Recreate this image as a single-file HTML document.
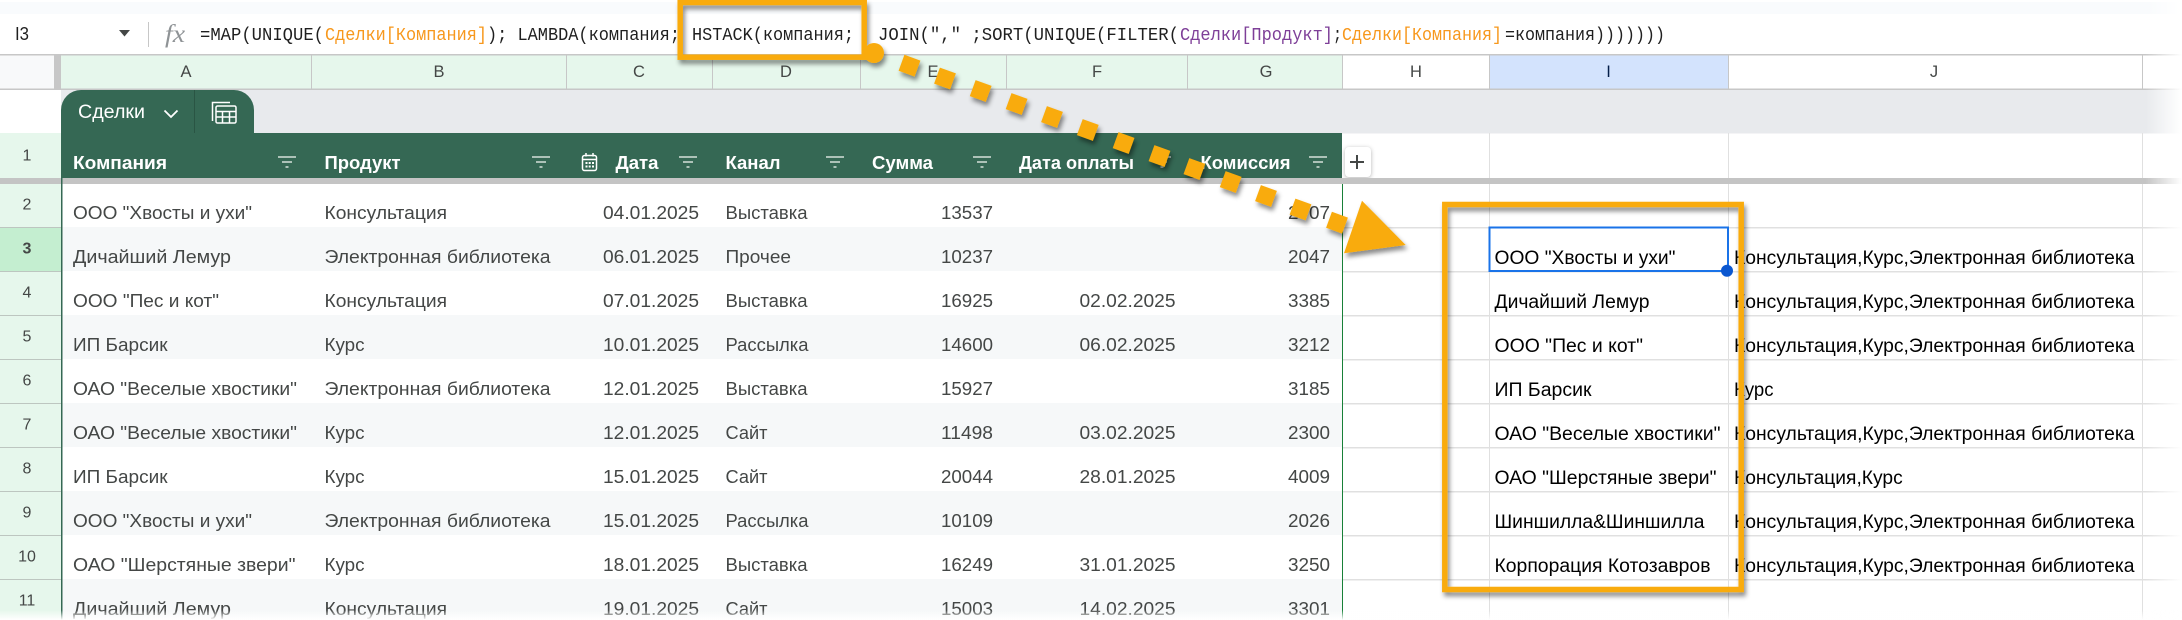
<!DOCTYPE html>
<html><head><meta charset="utf-8">
<style>
html,body{margin:0;padding:0;background:#fff;width:2182px;height:620px;overflow:hidden}
svg{display:block}
text{font-family:"Liberation Sans","Noto Sans CJK SC",sans-serif;white-space:pre}
.t{font-size:18.5px;fill:#444746}
.r{font-size:19px;fill:#000}
.h{font-size:18.5px;font-weight:bold;fill:#fff}
.m{font-family:"Liberation Mono",monospace;font-size:18px;fill:#1f1f1f}
.c{font-size:16.5px;fill:#444746;text-anchor:middle}
.n{font-size:16px;fill:#444746;text-anchor:middle}
</style></head><body>
<svg width="2182" height="620" viewBox="0 0 2182 620" xmlns="http://www.w3.org/2000/svg">
<defs>
<linearGradient id="fr" x1="0" x2="1" y1="0" y2="0"><stop offset="0" stop-color="#fff" stop-opacity="0"/><stop offset="1" stop-color="#fff"/></linearGradient>
<linearGradient id="fb" x1="0" x2="0" y1="0" y2="1"><stop offset="0" stop-color="#fff" stop-opacity="0"/><stop offset="1" stop-color="#fff"/></linearGradient>
<filter id="sh" x="-10%" y="-10%" width="125%" height="125%"><feDropShadow dx="2" dy="4" stdDeviation="2.5" flood-color="#000" flood-opacity=".45"/></filter>
</defs>
<rect width="2182" height="620" fill="#fff"/>
<!-- top band -->
<rect x="0" y="2" width="2182" height="12" fill="#f9fbfd"/>
<!-- formula bar -->
<text x="15" y="40" font-size="18" fill="#1f1f1f" textLength="14" lengthAdjust="spacingAndGlyphs">I3</text>
<path d="M119 30h11l-5.500 6.500z" fill="#444746"/>
<rect x="148" y="22" width="1" height="25" fill="#c7c7c7"/>
<text x="165" y="42" font-size="25" fill="#8f9396" style="font-family:'Liberation Serif',serif;font-style:italic" textLength="20" lengthAdjust="spacingAndGlyphs">fx</text>
<text class="m" x="200" y="40" textLength="124" lengthAdjust="spacingAndGlyphs">=MAP(UNIQUE(</text>
<text class="m" x="325" y="40" textLength="162" lengthAdjust="spacingAndGlyphs" style="fill:#f7981d">Сделки[Компания]</text>
<text class="m" x="487" y="40" textLength="193" lengthAdjust="spacingAndGlyphs">); LAMBDA(компания;</text>
<text class="m" x="692" y="40" textLength="162" lengthAdjust="spacingAndGlyphs">HSTACK(компания;</text>
<text class="m" x="878" y="40" textLength="301" lengthAdjust="spacingAndGlyphs">JOIN("," ;SORT(UNIQUE(FILTER(</text>
<text class="m" x="1180" y="40" textLength="153" lengthAdjust="spacingAndGlyphs" style="fill:#7e3f98">Сделки[Продукт]</text>
<text class="m" x="1333" y="40" textLength="9" lengthAdjust="spacingAndGlyphs">;</text>
<text class="m" x="1342" y="40" textLength="160" lengthAdjust="spacingAndGlyphs" style="fill:#f7981d">Сделки[Компания]</text>
<text class="m" x="1505" y="40" textLength="160" lengthAdjust="spacingAndGlyphs">=компания)))))))</text>
<!-- col headers -->
<rect x="0" y="55" width="54" height="34" fill="#f8f9fa"/>
<rect x="54" y="55" width="7" height="35" fill="#c7c7c7"/>
<rect x="61" y="55" width="1281" height="34" fill="#e6f7ec"/>
<rect x="1489" y="55" width="239" height="34" fill="#d3e3fd"/>
<rect x="0" y="54" width="2182" height="1.500" fill="#c7c7c7"/>
<rect x="0" y="88.500" width="2182" height="1.500" fill="#c7c7c7"/>
<g fill="#c7c7c7">
<rect x="311" y="55" width="1" height="34"/><rect x="566" y="55" width="1" height="34"/><rect x="712" y="55" width="1" height="34"/><rect x="860" y="55" width="1" height="34"/><rect x="1006" y="55" width="1" height="34"/><rect x="1187" y="55" width="1" height="34"/><rect x="1342" y="55" width="1" height="34"/><rect x="1489" y="55" width="1" height="34"/><rect x="1728" y="55" width="1" height="34"/><rect x="2142" y="55" width="1" height="34"/>
</g>
<text class="c" x="186" y="77">A</text><text class="c" x="439" y="77">B</text><text class="c" x="639" y="77">C</text><text class="c" x="786" y="77">D</text><text class="c" x="933" y="77">E</text><text class="c" x="1097" y="77">F</text><text class="c" x="1266" y="77">G</text><text class="c" x="1416" y="77">H</text><text class="c" x="1608.500" y="77" style="fill:#041e49">I</text><text class="c" x="1934" y="77">J</text>
<!-- gray band -->
<rect x="61" y="90" width="2121" height="43.500" fill="#e8eaed"/>
<!-- row number col -->
<rect x="0" y="133" width="61" height="487" fill="#e6f7ec"/>
<rect x="0" y="227" width="61" height="44" fill="#c4eed0"/>
<g fill="#bdc6c0">
<rect x="0" y="227" width="61" height="1"/><rect x="0" y="271" width="61" height="1"/><rect x="0" y="315" width="61" height="1"/><rect x="0" y="359" width="61" height="1"/><rect x="0" y="403" width="61" height="1"/><rect x="0" y="447" width="61" height="1"/><rect x="0" y="491" width="61" height="1"/><rect x="0" y="535" width="61" height="1"/><rect x="0" y="579" width="61" height="1"/>
</g>
<text class="n" x="27" y="160.500">1</text><text class="n" x="27" y="209.500">2</text><text class="n" x="27" y="253.500" style="font-weight:bold">3</text><text class="n" x="27" y="297.500">4</text><text class="n" x="27" y="341.500">5</text><text class="n" x="27" y="385.500">6</text><text class="n" x="27" y="429.500">7</text><text class="n" x="27" y="473.500">8</text><text class="n" x="27" y="517.500">9</text><text class="n" x="27" y="561.500">10</text><text class="n" x="27" y="605.500">11</text>
<!-- grid right -->
<g fill="#e0e0e0">
<rect x="1342" y="227" width="840" height="1.500"/><rect x="1342" y="271" width="840" height="1.500"/><rect x="1342" y="315" width="840" height="1.500"/><rect x="1342" y="359" width="840" height="1.500"/><rect x="1342" y="403" width="840" height="1.500"/><rect x="1342" y="447" width="840" height="1.500"/><rect x="1342" y="491" width="840" height="1.500"/><rect x="1342" y="535" width="840" height="1.500"/><rect x="1342" y="579" width="840" height="1.500"/>
<rect x="1489" y="133" width="1" height="487"/><rect x="1728" y="133" width="1" height="487"/><rect x="2142" y="133" width="1" height="487"/>
</g>
<!-- stripes -->
<rect x="62" y="184" width="1280" height="436" fill="#fff"/>
<g fill="#f6f8f9">
<rect x="62" y="227" width="1280" height="44"/><rect x="62" y="315" width="1280" height="44"/><rect x="62" y="403" width="1280" height="44"/><rect x="62" y="491" width="1280" height="44"/><rect x="62" y="579" width="1280" height="41"/>
</g>
<!-- tab -->
<path d="M61 133V110a20 20 0 0 1 20-20H234a20 20 0 0 1 20 20V133z" fill="#356854"/>
<rect x="194" y="90" width="1" height="43" fill="#2a5544"/>
<text x="78" y="118" font-size="19" fill="#fff" textLength="67" lengthAdjust="spacingAndGlyphs">Сделки</text>
<path d="M164.500 110.500l6.500 6.500 6.500-6.500" fill="none" stroke="#fff" stroke-width="1.800"/>
<g fill="none" stroke="#fff" stroke-width="1.500"><path d="M212.500 121V102.500H230"/><rect x="216" y="106" width="20" height="17" rx="1.500"/><path d="M216 111.500h20M216 117h20M222.500 111.500V123M229.500 111.500V123"/></g>
<!-- header row -->
<rect x="61" y="133" width="1281" height="45" fill="#356854"/>
<text class="h" x="73" y="169" textLength="94" lengthAdjust="spacingAndGlyphs">Компания</text>
<text class="h" x="324.500" y="169" textLength="76" lengthAdjust="spacingAndGlyphs">Продукт</text>
<text class="h" x="615.500" y="169" textLength="43" lengthAdjust="spacingAndGlyphs">Дата</text>
<text class="h" x="725.500" y="169" textLength="55" lengthAdjust="spacingAndGlyphs">Канал</text>
<text class="h" x="872" y="169" textLength="61" lengthAdjust="spacingAndGlyphs">Сумма</text>
<text class="h" x="1019" y="169" textLength="115" lengthAdjust="spacingAndGlyphs">Дата оплаты</text>
<text class="h" x="1200.500" y="169" textLength="90" lengthAdjust="spacingAndGlyphs">Комиссия</text>
<g fill="none" stroke="#d5e0da" stroke-width="1.500">
<path d="M278 157h18M282 162h10M285.500 167h3"/><path d="M532 157h18M536 162h10M539.500 167h3"/><path d="M679 157h18M683 162h10M686.500 167h3"/><path d="M826 157h18M830 162h10M833.500 167h3"/><path d="M973 157h18M977 162h10M980.500 167h3"/><path d="M1153 157h18M1157 162h10M1160.500 167h3"/><path d="M1309 157h18M1313 162h10M1316.500 167h3"/>
</g>
<g fill="none" stroke="#fff" stroke-width="1.500"><rect x="582.500" y="155.500" width="14" height="15" rx="2"/><path d="M582.500 159.500h14M586 153v3.500M593 153v3.500"/></g>
<g fill="#fff"><rect x="585.500" y="162" width="2" height="2"/><rect x="588.700" y="162" width="2" height="2"/><rect x="592" y="162" width="2" height="2"/><rect x="585.500" y="165.500" width="2" height="2"/><rect x="588.700" y="165.500" width="2" height="2"/><rect x="592" y="165.500" width="2" height="2"/></g>
<!-- plus -->
<rect x="1345" y="147" width="26" height="30" rx="4" fill="#fff" style="filter:drop-shadow(0 1px 2px rgba(0,0,0,.3))"/>
<path d="M1350 162h14M1357 155v14" stroke="#444746" stroke-width="2" fill="none"/>
<!-- freeze bar -->
<rect x="0" y="178" width="2182" height="6" fill="#c4c4c4"/>
<!-- table borders -->
<rect x="61" y="133" width="1.500" height="487" fill="#356854"/>
<rect x="1342" y="184" width="1" height="436" fill="#188038"/>
<!-- data -->
<g class="d">
<text class="t" x="73" y="219" textLength="179" lengthAdjust="spacingAndGlyphs">ООО "Хвосты и ухи"</text>
<text class="t" x="73" y="263" textLength="158" lengthAdjust="spacingAndGlyphs">Дичайший Лемур</text>
<text class="t" x="73" y="307" textLength="146" lengthAdjust="spacingAndGlyphs">ООО "Пес и кот"</text>
<text class="t" x="73" y="351" textLength="94.500" lengthAdjust="spacingAndGlyphs">ИП Барсик</text>
<text class="t" x="73" y="395" textLength="224" lengthAdjust="spacingAndGlyphs">ОАО "Веселые хвостики"</text>
<text class="t" x="73" y="439" textLength="224" lengthAdjust="spacingAndGlyphs">ОАО "Веселые хвостики"</text>
<text class="t" x="73" y="483" textLength="94.500" lengthAdjust="spacingAndGlyphs">ИП Барсик</text>
<text class="t" x="73" y="527" textLength="179" lengthAdjust="spacingAndGlyphs">ООО "Хвосты и ухи"</text>
<text class="t" x="73" y="571" textLength="222.500" lengthAdjust="spacingAndGlyphs">ОАО "Шерстяные звери"</text>
<text class="t" x="73" y="615" textLength="158" lengthAdjust="spacingAndGlyphs">Дичайший Лемур</text>

<text class="t" x="324.500" y="219" textLength="122.500" lengthAdjust="spacingAndGlyphs">Консультация</text>
<text class="t" x="324.500" y="263" textLength="226" lengthAdjust="spacingAndGlyphs">Электронная библиотека</text>
<text class="t" x="324.500" y="307" textLength="122.500" lengthAdjust="spacingAndGlyphs">Консультация</text>
<text class="t" x="324.500" y="351" textLength="40" lengthAdjust="spacingAndGlyphs">Курс</text>
<text class="t" x="324.500" y="395" textLength="226" lengthAdjust="spacingAndGlyphs">Электронная библиотека</text>
<text class="t" x="324.500" y="439" textLength="40" lengthAdjust="spacingAndGlyphs">Курс</text>
<text class="t" x="324.500" y="483" textLength="40" lengthAdjust="spacingAndGlyphs">Курс</text>
<text class="t" x="324.500" y="527" textLength="226" lengthAdjust="spacingAndGlyphs">Электронная библиотека</text>
<text class="t" x="324.500" y="571" textLength="40" lengthAdjust="spacingAndGlyphs">Курс</text>
<text class="t" x="324.500" y="615" textLength="122.500" lengthAdjust="spacingAndGlyphs">Консультация</text>

<text class="t" x="603" y="219" textLength="96" lengthAdjust="spacingAndGlyphs">04.01.2025</text>
<text class="t" x="603" y="263" textLength="96" lengthAdjust="spacingAndGlyphs">06.01.2025</text>
<text class="t" x="603" y="307" textLength="96" lengthAdjust="spacingAndGlyphs">07.01.2025</text>
<text class="t" x="603" y="351" textLength="96" lengthAdjust="spacingAndGlyphs">10.01.2025</text>
<text class="t" x="603" y="395" textLength="96" lengthAdjust="spacingAndGlyphs">12.01.2025</text>
<text class="t" x="603" y="439" textLength="96" lengthAdjust="spacingAndGlyphs">12.01.2025</text>
<text class="t" x="603" y="483" textLength="96" lengthAdjust="spacingAndGlyphs">15.01.2025</text>
<text class="t" x="603" y="527" textLength="96" lengthAdjust="spacingAndGlyphs">15.01.2025</text>
<text class="t" x="603" y="571" textLength="96" lengthAdjust="spacingAndGlyphs">18.01.2025</text>
<text class="t" x="603" y="615" textLength="96" lengthAdjust="spacingAndGlyphs">19.01.2025</text>

<text class="t" x="725.500" y="219" textLength="82" lengthAdjust="spacingAndGlyphs">Выставка</text>
<text class="t" x="725.500" y="263" textLength="65.500" lengthAdjust="spacingAndGlyphs">Прочее</text>
<text class="t" x="725.500" y="307" textLength="82" lengthAdjust="spacingAndGlyphs">Выставка</text>
<text class="t" x="725.500" y="351" textLength="83" lengthAdjust="spacingAndGlyphs">Рассылка</text>
<text class="t" x="725.500" y="395" textLength="82" lengthAdjust="spacingAndGlyphs">Выставка</text>
<text class="t" x="725.500" y="439" textLength="42" lengthAdjust="spacingAndGlyphs">Сайт</text>
<text class="t" x="725.500" y="483" textLength="42" lengthAdjust="spacingAndGlyphs">Сайт</text>
<text class="t" x="725.500" y="527" textLength="83" lengthAdjust="spacingAndGlyphs">Рассылка</text>
<text class="t" x="725.500" y="571" textLength="82" lengthAdjust="spacingAndGlyphs">Выставка</text>
<text class="t" x="725.500" y="615" textLength="42" lengthAdjust="spacingAndGlyphs">Сайт</text>

<text class="t" x="941" y="219" textLength="52" lengthAdjust="spacingAndGlyphs">13537</text>
<text class="t" x="941" y="263" textLength="52" lengthAdjust="spacingAndGlyphs">10237</text>
<text class="t" x="941" y="307" textLength="52" lengthAdjust="spacingAndGlyphs">16925</text>
<text class="t" x="941" y="351" textLength="52" lengthAdjust="spacingAndGlyphs">14600</text>
<text class="t" x="941" y="395" textLength="52" lengthAdjust="spacingAndGlyphs">15927</text>
<text class="t" x="941" y="439" textLength="52" lengthAdjust="spacingAndGlyphs">11498</text>
<text class="t" x="941" y="483" textLength="52" lengthAdjust="spacingAndGlyphs">20044</text>
<text class="t" x="941" y="527" textLength="52" lengthAdjust="spacingAndGlyphs">10109</text>
<text class="t" x="941" y="571" textLength="52" lengthAdjust="spacingAndGlyphs">16249</text>
<text class="t" x="941" y="615" textLength="52" lengthAdjust="spacingAndGlyphs">15003</text>

<text class="t" x="1079.500" y="307" textLength="96" lengthAdjust="spacingAndGlyphs">02.02.2025</text>
<text class="t" x="1079.500" y="351" textLength="96" lengthAdjust="spacingAndGlyphs">06.02.2025</text>
<text class="t" x="1079.500" y="439" textLength="96" lengthAdjust="spacingAndGlyphs">03.02.2025</text>
<text class="t" x="1079.500" y="483" textLength="96" lengthAdjust="spacingAndGlyphs">28.01.2025</text>
<text class="t" x="1079.500" y="571" textLength="96" lengthAdjust="spacingAndGlyphs">31.01.2025</text>
<text class="t" x="1079.500" y="615" textLength="96" lengthAdjust="spacingAndGlyphs">14.02.2025</text>

<text class="t" x="1288" y="219" textLength="42" lengthAdjust="spacingAndGlyphs">2707</text>
<text class="t" x="1288" y="263" textLength="42" lengthAdjust="spacingAndGlyphs">2047</text>
<text class="t" x="1288" y="307" textLength="42" lengthAdjust="spacingAndGlyphs">3385</text>
<text class="t" x="1288" y="351" textLength="42" lengthAdjust="spacingAndGlyphs">3212</text>
<text class="t" x="1288" y="395" textLength="42" lengthAdjust="spacingAndGlyphs">3185</text>
<text class="t" x="1288" y="439" textLength="42" lengthAdjust="spacingAndGlyphs">2300</text>
<text class="t" x="1288" y="483" textLength="42" lengthAdjust="spacingAndGlyphs">4009</text>
<text class="t" x="1288" y="527" textLength="42" lengthAdjust="spacingAndGlyphs">2026</text>
<text class="t" x="1288" y="571" textLength="42" lengthAdjust="spacingAndGlyphs">3250</text>
<text class="t" x="1288" y="615" textLength="42" lengthAdjust="spacingAndGlyphs">3301</text>
</g>
<!-- result columns -->
<text class="r" x="1494.500" y="264" textLength="181" lengthAdjust="spacingAndGlyphs">ООО "Хвосты и ухи"</text>
<text class="r" x="1494.500" y="308" textLength="155" lengthAdjust="spacingAndGlyphs">Дичайший Лемур</text>
<text class="r" x="1494.500" y="352" textLength="148.500" lengthAdjust="spacingAndGlyphs">ООО "Пес и кот"</text>
<text class="r" x="1494.500" y="396" textLength="97" lengthAdjust="spacingAndGlyphs">ИП Барсик</text>
<text class="r" x="1494.500" y="440" textLength="226" lengthAdjust="spacingAndGlyphs">ОАО "Веселые хвостики"</text>
<text class="r" x="1494.500" y="484" textLength="222" lengthAdjust="spacingAndGlyphs">ОАО "Шерстяные звери"</text>
<text class="r" x="1494.500" y="528" textLength="210" lengthAdjust="spacingAndGlyphs">Шиншилла&amp;Шиншилла</text>
<text class="r" x="1494.500" y="572" textLength="216" lengthAdjust="spacingAndGlyphs">Корпорация Котозавров</text>

<text class="r" x="1734" y="264" textLength="400.500" lengthAdjust="spacingAndGlyphs">Консультация,Курс,Электронная библиотека</text>
<text class="r" x="1734" y="308" textLength="400.500" lengthAdjust="spacingAndGlyphs">Консультация,Курс,Электронная библиотека</text>
<text class="r" x="1734" y="352" textLength="400.500" lengthAdjust="spacingAndGlyphs">Консультация,Курс,Электронная библиотека</text>
<text class="r" x="1734" y="396" textLength="39.500" lengthAdjust="spacingAndGlyphs">Курс</text>
<text class="r" x="1734" y="440" textLength="400.500" lengthAdjust="spacingAndGlyphs">Консультация,Курс,Электронная библиотека</text>
<text class="r" x="1734" y="484" textLength="168.700" lengthAdjust="spacingAndGlyphs">Консультация,Курс</text>
<text class="r" x="1734" y="528" textLength="400.500" lengthAdjust="spacingAndGlyphs">Консультация,Курс,Электронная библиотека</text>
<text class="r" x="1734" y="572" textLength="400.500" lengthAdjust="spacingAndGlyphs">Консультация,Курс,Электронная библиотека</text>
<!-- selection -->
<rect x="1489.500" y="227.500" width="238.500" height="43.500" fill="none" stroke="#1a73e8" stroke-width="2"/>
<!-- annotation -->
<g filter="url(#sh)" fill="#f9ab0a">
<rect x="680.200" y="2.500" width="184" height="54.700" fill="none" stroke="#f9ab0a" stroke-width="5.500"/>
<circle cx="874" cy="53" r="10"/>
<rect x="-8.500" y="-8.500" width="17" height="17" transform="translate(909.500 65.700) rotate(20)"/>
<rect x="-8.500" y="-8.500" width="17" height="17" transform="translate(945 78.500) rotate(20)"/>
<rect x="-8.500" y="-8.500" width="17" height="17" transform="translate(980.700 91) rotate(20)"/>
<rect x="-8.500" y="-8.500" width="17" height="17" transform="translate(1016.600 104) rotate(20)"/>
<rect x="-8.500" y="-8.500" width="17" height="17" transform="translate(1052 117) rotate(20)"/>
<rect x="-8.500" y="-8.500" width="17" height="17" transform="translate(1087.800 130) rotate(20)"/>
<rect x="-8.500" y="-8.500" width="17" height="17" transform="translate(1123.600 143) rotate(20)"/>
<rect x="-8.500" y="-8.500" width="17" height="17" transform="translate(1159.500 156) rotate(20)"/>
<rect x="-8.500" y="-8.500" width="17" height="17" transform="translate(1194.400 169) rotate(20)"/>
<rect x="-8.500" y="-8.500" width="17" height="17" transform="translate(1230.700 182) rotate(20)"/>
<rect x="-8.500" y="-8.500" width="17" height="17" transform="translate(1266 196) rotate(20)"/>
<rect x="-8.500" y="-8.500" width="17" height="17" transform="translate(1300.500 209.500) rotate(20)"/>
<rect x="-8.500" y="-8.500" width="17" height="17" transform="translate(1337 222.700) rotate(20)"/>
<path d="M1362 200.700L1405.700 245L1344 253.300z"/>
<rect x="1444.800" y="204.500" width="296.400" height="385" fill="none" stroke="#f9ab0a" stroke-width="5.500"/>
</g>
<circle cx="1727" cy="270.700" r="6" fill="#0b57d0"/>
<!-- fades -->
<rect x="2145" y="0" width="37" height="620" fill="url(#fr)"/>
<rect x="0" y="610" width="2182" height="10" fill="url(#fb)"/>
</svg>
</body></html>
